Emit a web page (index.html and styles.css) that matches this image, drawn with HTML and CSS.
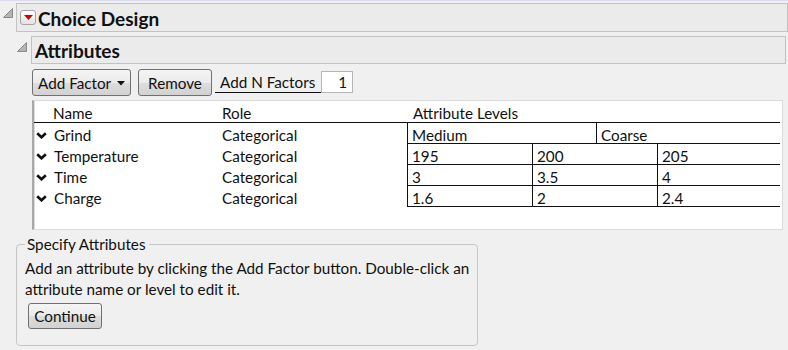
FILE: index.html
```html
<!DOCTYPE html>
<html>
<head>
<meta charset="utf-8">
<title>Choice Design</title>
<link rel="stylesheet" href="styles.css">
</head>
<body>
<div class="topline"></div>

<div class="outline lvl1">
  <svg class="disc" width="10" height="10" viewBox="0 0 10 10"><polygon points="0.5,9.5 9.5,0.5 9.5,9.5" fill="#b4b4b4" stroke="#8a8a8a" stroke-width="1"/></svg>
  <div class="ohead h1">
    <span class="redbtn"><svg width="9" height="5" viewBox="0 0 9 5"><polygon points="0,0 9,0 4.5,5" fill="#d60000"/></svg></span>
    <span class="otitle">Choice Design</span>
  </div>
</div>

<div class="outline lvl2">
  <svg class="disc" width="10" height="10" viewBox="0 0 10 10"><polygon points="0.5,9.5 9.5,0.5 9.5,9.5" fill="#b4b4b4" stroke="#8a8a8a" stroke-width="1"/></svg>
  <div class="ohead h2">
    <span class="otitle">Attributes</span>
  </div>
</div>

<div class="content">
  <div class="toolbar">
    <button class="btn addf">Add Factor <svg width="8" height="5" viewBox="0 0 8 5"><polygon points="0,0 8,0 4,4.5" fill="#111"/></svg></button>
    <button class="btn remove">Remove</button>
    <span class="nlabel">Add N Factors</span>
    <span class="ninput">1</span>
  </div>

  <div class="table">
    <div class="thead">
      <span class="c-name">Name</span>
      <span class="c-role">Role</span>
      <span class="c-lev">Attribute Levels</span>
    </div>

    <div class="trow">
      <span class="c-name"><svg class="chev" width="11" height="7" viewBox="0 0 11 7"><polyline points="1.2,1.2 5.5,5.3 9.8,1.2" fill="none" stroke="#111" stroke-width="2.6"/></svg>Grind</span>
      <span class="c-role">Categorical</span>
      <span class="c-lev"><span class="lv w-med">Medium</span><span class="lv w-coarse">Coarse</span></span>
    </div>
    <div class="trow">
      <span class="c-name"><svg class="chev" width="11" height="7" viewBox="0 0 11 7"><polyline points="1.2,1.2 5.5,5.3 9.8,1.2" fill="none" stroke="#111" stroke-width="2.6"/></svg>Temperature</span>
      <span class="c-role">Categorical</span>
      <span class="c-lev"><span class="lv w-3">195</span><span class="lv w-3">200</span><span class="lv w-3l">205</span></span>
    </div>
    <div class="trow">
      <span class="c-name"><svg class="chev" width="11" height="7" viewBox="0 0 11 7"><polyline points="1.2,1.2 5.5,5.3 9.8,1.2" fill="none" stroke="#111" stroke-width="2.6"/></svg>Time</span>
      <span class="c-role">Categorical</span>
      <span class="c-lev"><span class="lv w-3">3</span><span class="lv w-3">3.5</span><span class="lv w-3l">4</span></span>
    </div>
    <div class="trow">
      <span class="c-name"><svg class="chev" width="11" height="7" viewBox="0 0 11 7"><polyline points="1.2,1.2 5.5,5.3 9.8,1.2" fill="none" stroke="#111" stroke-width="2.6"/></svg>Charge</span>
      <span class="c-role">Categorical</span>
      <span class="c-lev"><span class="lv w-3">1.6</span><span class="lv w-3">2</span><span class="lv w-3l">2.4</span></span>
    </div>
  </div>
</div>

<fieldset class="spec">
  <legend>Specify Attributes</legend>
  <p>Add an attribute by clicking the Add Factor button. Double-click an attribute name or level to edit it.</p>
  <button class="btn cont">Continue</button>
</fieldset>
</body>
</html>
```

FILE: styles.css
```css
html, body {
  margin: 0;
  padding: 0;
}
body {
  width: 788px;
  height: 350px;
  overflow: hidden;
  background: #f0f0f0;
  font-family: Lato, "Open Sans", sans-serif;
  font-size: 15.25px;
  color: #111;
}

.topline {
  height: 1px;
  background: #dcdcef;
}

/* outline headers */
.outline {
  display: flex;
  align-items: flex-start;
}
.disc {
  flex: none;
  display: block;
}
.lvl1 {
  margin-top: 2px;
  padding-left: 3px;
}
.lvl1 .disc {
  margin-top: 5px;
  margin-right: 3px;
}
.lvl2 {
  margin-top: 4px;
  padding-left: 17px;
  padding-right: 2px;
}
.lvl2 .disc {
  margin-top: 6px;
  margin-right: 4px;
}
.ohead {
  flex: 1;
  display: flex;
  align-items: center;
  box-sizing: border-box;
  border: 1px solid #c2c2c2;
  background: #ebebeb;
  padding-left: 3px;
}
.h1 {
  height: 29px;
}
.h2 {
  height: 28px;
}
.otitle {
  font-weight: 700;
  font-size: 19px;
  color: #111;
  padding-top: 1px;
}
.h1 .otitle {
  margin-left: 2px;
}
.redbtn {
  box-sizing: border-box;
  width: 16px;
  height: 15px;
  border: 1px solid #a4a4a4;
  border-radius: 3px;
  background: linear-gradient(#ffffff, #e2e2e2);
  display: flex;
  align-items: center;
  justify-content: center;
}

/* buttons */
.btn {
  box-sizing: border-box;
  font-family: inherit;
  font-size: 15.25px;
  color: #111;
  border: 1px solid #707070;
  border-radius: 3px;
  background: linear-gradient(#f4f4f4 0%, #ebebeb 50%, #dddddd 51%, #d2d2d2 100%);
  height: 27px;
  padding: 0;
  margin: 0;
}

.content {
  padding-left: 32px;
  margin-top: 5px;
}
.toolbar {
  display: flex;
  align-items: flex-start;
  height: 27px;
}
.addf {
  width: 99px;
  display: flex;
  align-items: center;
  padding-left: 5px;
  gap: 6px;
}
.addf svg {
  display: block;
  margin-top: 1px;
}
.remove {
  width: 74px;
  margin-left: 7px;
}
.nlabel {
  box-sizing: border-box;
  margin-left: 3px;
  width: 106px;
  height: 24px;
  padding-left: 5px;
  padding-top: 5px;
  line-height: 16px;
  border-bottom: 1px solid #111;
}
.ninput {
  box-sizing: border-box;
  width: 32px;
  height: 22px;
  margin-top: 2px;
  background: #fff;
  border: 1px solid #b5b5b5;
  text-align: right;
  padding-right: 5px;
  line-height: 20px;
}

/* table */
.table {
  box-sizing: border-box;
  margin-top: 4px;
  width: 751px;
  height: 130px;
  background: #fff;
  border-top: 1px solid #dadada;
  border-left: 2px solid #a8a8a8;
  border-right: 1px solid #dcdcdc;
  border-bottom: 1px solid #dcdcdc;
  box-shadow: inset 1px 0 0 #dcdcdc;
  padding-right: 2px;
}
.thead, .trow {
  display: flex;
  line-height: 16px;
}
.thead {
  height: 22px;
  box-sizing: border-box;
  border-bottom: 1px solid #111;
}
.thead > span {
  padding-top: 4px;
}
.c-name {
  width: 187px;
  box-sizing: border-box;
  display: flex;
  align-items: flex-start;
}
.thead .c-name {
  padding-left: 19px;
}
.trow .c-name {
  padding-left: 2px;
  padding-top: 4px;
}
.chev {
  flex: none;
  margin-top: 5px;
  margin-right: 7px;
}
.c-role {
  width: 186px;
  box-sizing: border-box;
  padding-left: 1px;
}
.trow .c-role {
  padding-top: 4px;
}
.c-lev {
  flex: 1;
  display: flex;
}
.thead .c-lev {
  padding-left: 6px;
}
.lv {
  box-sizing: border-box;
  height: 21px;
  border-left: 1px solid #111;
  border-bottom: 1px solid #111;
  padding-left: 4px;
  padding-top: 4px;
}
.w-med { width: 189px; }
.w-coarse { width: 184px; }
.w-3 { width: 125px; }
.w-3l { width: 123px; }

/* specify group */
.spec {
  box-sizing: border-box;
  margin: 6px 0 0 16px;
  width: 462px;
  height: 110px;
  border: 1px solid #c6c6c6;
  border-radius: 4px;
  padding: 0 3px 0 8px;
}
.spec legend {
  padding: 0 3px 0 2px;
  line-height: 16px;
  font-size: 15.25px;
}
.spec p {
  margin: 6px 0 0 0;
  line-height: 21px;
}
.cont {
  width: 74px;
  height: 26px;
  margin: 3px 0 0 3px;
}
```
